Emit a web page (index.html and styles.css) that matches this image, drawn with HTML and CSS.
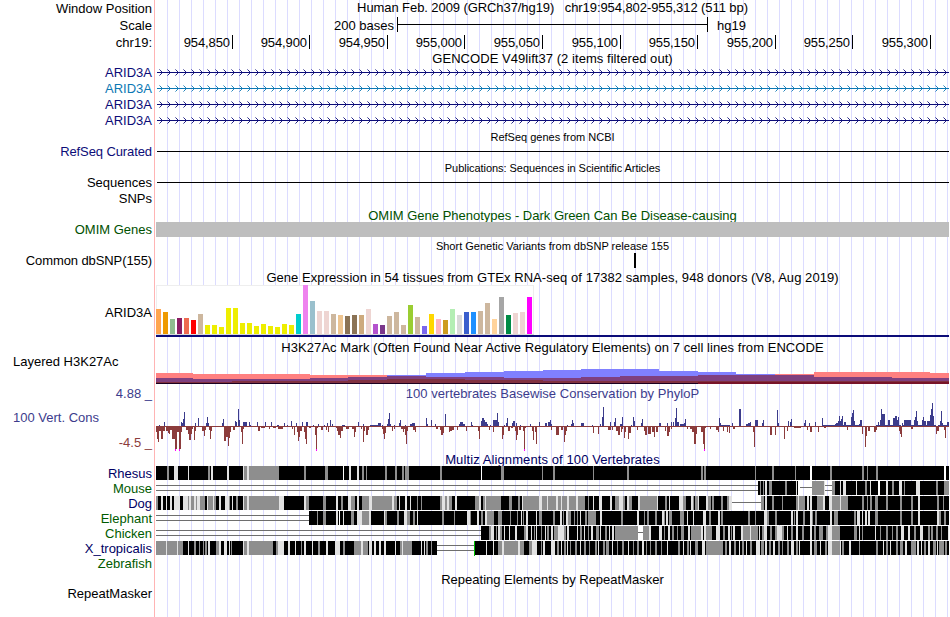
FILE: index.html
```html
<!DOCTYPE html>
<html lang="en">

<head>
    <meta charset="utf-8">
    <title>chr19:954,802-955,312</title>
    <link rel="stylesheet" href="styles.css">
</head>

<body>
    <div class="browser">
        <div class="row position"><span class="label">Window Position</span><div class="track title">Human Feb. 2009 (GRCh37/hg19) &nbsp; chr19:954,802-955,312 (511 bp)</div></div>
        <div class="row scale"><span class="label">Scale</span>
            <div class="track scale-track"><span class="bases">200 bases</span><span class="scale-bar"></span><span>hg19</span></div>
        </div>
        <div class="row ruler"><span class="label">chr19:</span>
            <div class="track ticks">
                <span>954,850</span><span>954,900</span><span>954,950</span><span>955,000</span><span>955,050</span>
                <span>955,100</span><span>955,150</span><span>955,200</span><span>955,250</span><span>955,300</span>
            </div>
        </div>
        <div class="row gencode"><span class="label"></span><div class="track title">GENCODE V49lift37 (2 items filtered out)</div></div>
        <div class="row gene navy"><span class="label">ARID3A</span><svg class="track transcript"></svg></div>
        <div class="row gene blue"><span class="label">ARID3A</span><svg class="track transcript"></svg></div>
        <div class="row gene navy"><span class="label">ARID3A</span><svg class="track transcript"></svg></div>
        <div class="row gene navy"><span class="label">ARID3A</span><svg class="track transcript"></svg></div>

        <div class="row small"><span class="label"></span><div class="track title">RefSeq genes from NCBI</div></div>
        <div class="row refseq navy"><span class="label tight">RefSeq Curated</span><div class="track"><div class="line"></div></div></div>
        <div class="row small"><span class="label"></span><div class="track title tight">Publications: Sequences in Scientific Articles</div></div>
        <div class="row sequences"><span class="label">Sequences</span><div class="track"><div class="line"></div></div></div>
        <div class="row snps"><span class="label">SNPs</span></div>
        <div class="row omim-title green"><span class="label"></span><div class="track title">OMIM Gene Phenotypes - Dark Green Can Be Disease-causing</div></div>
        <div class="row omim green"><span class="label">OMIM Genes</span><div class="track gray-bar"></div></div>
        <div class="row small"><span class="label"></span><div class="track title">Short Genetic Variants from dbSNP release 155</div></div>
        <div class="row dbsnp"><span class="label tight">Common dbSNP(155)</span><div class="track"><div class="snp"></div></div></div>

        <div class="row gtex-title"><span class="label"></span><div class="track title">Gene Expression in 54 tissues from GTEx RNA-seq of 17382 samples, 948 donors (V8, Aug 2019)</div></div>
        <div class="row gtex"><span class="label">ARID3A</span><svg class="track" id="gtex"></svg></div>

        <div class="row h3k-title"><span class="label"></span><div class="track title">H3K27Ac Mark (Often Found Near Active Regulatory Elements) on 7 cell lines from ENCODE</div></div>
        <div class="row h3k"><span class="label left">Layered H3K27Ac</span><svg class="track" id="h3k"></svg></div>

        <div class="row cons-title cons-blue"><span class="label">4.88 _</span><div class="track title">100 vertebrates Basewise Conservation by PhyloP</div></div>
        <div class="row cons">
            <div class="label cons-labels"><span class="cons-blue name">100 Vert. Cons</span><span class="cons-red">-4.5 _</span></div>
            <svg class="track" id="phylop"></svg>
        </div>
        <div class="row multiz-title dark"><span class="label"></span><div class="track title">Multiz Alignments of 100 Vertebrates</div></div>
        <div class="row align dark"><span class="label">Rhesus</span><svg class="track" id="rhesus"></svg></div>
        <div class="row align forest"><span class="label">Mouse</span><svg class="track" id="mouse"></svg></div>
        <div class="row align dark"><span class="label">Dog</span><svg class="track" id="dog"></svg></div>
        <div class="row align forest"><span class="label">Elephant</span><svg class="track" id="elephant"></svg></div>
        <div class="row align forest"><span class="label">Chicken</span><svg class="track" id="chicken"></svg></div>
        <div class="row align dark"><span class="label">X_tropicalis</span><svg class="track" id="xtropicalis"></svg></div>
        <div class="row align forest"><span class="label">Zebrafish</span></div>

        <div class="row repeat-title"><span class="label"></span><div class="track title">Repeating Elements by RepeatMasker</div></div>
        <div class="row repeat"><span class="label">RepeatMasker</span></div>
    </div>

    <script src="script.js"></script>
</body>

</html>
```
FILE: styles.css
```css
body {
    margin: 0;
    background: white;
    color: black;
    font-family: "Liberation Sans", Arial, sans-serif;
    font-size: 13px;
    overflow: hidden;
}

/* pink divider after the labels, guide lines every 12px */
.browser {
    width: 949px;
    height: 617px;
    background:
        linear-gradient(to right, white 154px, #ffb4b4 154px, #ffb4b4 155px, white 155px) 0 0 / 156px 100% no-repeat,
        linear-gradient(to right, #dcdcff 1px, transparent 1px) 11px 0 / 12px 100%;
}

.row {
    display: grid;
    grid-template-columns: 152px 793px;
    column-gap: 4px;
    height: 16px;
    line-height: 16px;
    white-space: pre;
}

.label {
    text-align: right;
}

.label.left {
    text-align: left;
    padding-left: 13px;
}

.track {
    display: block;
    width: 793px;
    height: 100%;
    shape-rendering: crispEdges;
}

.title {
    text-align: center;
}

.label.tight { letter-spacing: -0.1px; }
.title.tight { letter-spacing: -0.05px; }

.position { height: 17px; line-height: 18px; }
.position .title { line-height: 16px; letter-spacing: -0.08px; }
.scale { height: 17px; line-height: 17px; }
.ruler { height: 17px; line-height: 17px; }
.gencode { height: 14px; line-height: 15px; letter-spacing: 0.05px; }
.refseq { height: 16px; }
.sequences { height: 15px; }
.snps { line-height: 17px; }
.omim-title { line-height: 19px; }
.omim { height: 16px; }
.dbsnp { height: 16px; }
.gtex-title { height: 16px; line-height: 18px; letter-spacing: 0.055px; }
.gtex { height: 55px; line-height: 55px; }
.h3k-title { height: 15px; letter-spacing: 0.055px; }
.h3k { height: 30px; line-height: 14px; }
.cons-title { height: 15px; line-height: 17px; }
.cons-title .title { letter-spacing: 0.03px; }
.cons { height: 53px; }
.multiz-title { height: 13px; line-height: 14px; letter-spacing: 0.1px; }
.align { height: 15px; line-height: 16px; }
.repeat-title { height: 15px; line-height: 17px; }
.repeat { height: 16px; }

.small {
    height: 15px;
    line-height: 16px;
    font-size: 11px;
}

.navy { color: #0c0c78; }
.blue { color: #0c78b4; }
.green { color: #005000; }
.dark { color: #000064; }
.forest { color: #005a00; }
.cons-blue { color: #3c3c8c; }
.cons-red { color: #8c3c3c; }

.scale-track {
    display: flex;
}

.bases {
    width: 238px;
    text-align: right;
}

.scale-bar {
    width: 309px;
    height: 15px;
    margin: 0 9px 0 3px;
    border: solid black;
    border-width: 0 1px;
    background: linear-gradient(black, black) 0 7px / 100% 1px no-repeat;
}

.ticks {
    display: grid;
    grid-template-columns: 77px 77px 78px 77px 78px 78px 77px 78px 77px 78px;
    text-align: right;
    letter-spacing: -0.1px;
}

.ticks span {
    height: 14px;
    margin-top: 1px;
    line-height: 15px;
    padding-right: 2px;
    border-right: 1px solid black;
}

.line {
    height: 1px;
    margin: 7px 0 0 1px;
    background: black;
}

.gray-bar {
    height: 15px;
    background: #bebebe;
}

.snp {
    width: 2px;
    height: 15px;
    margin-left: 478px;
    background: black;
}

.cons-labels {
    display: flex;
    flex-direction: column;
}

.cons-labels .name {
    text-align: left;
    padding: 10px 0 9px 13px;
}
```
FILE: script.js
```js
const NS = 'http://www.w3.org/2000/svg';

function rect(svg, x, y, w, h, fill, opacity = 1) {
    const r = document.createElementNS(NS, 'rect');
    r.setAttribute('x', x);
    r.setAttribute('y', y);
    r.setAttribute('width', w);
    r.setAttribute('height', h);
    r.setAttribute('fill', fill);
    if (opacity < 1) r.setAttribute('fill-opacity', opacity);
    svg.appendChild(r);
}

// transcripts: intron line with strand arrows
document.querySelectorAll('.transcript').forEach(svg => {
    rect(svg, 1, 7, 792, 1, 'currentColor');
    for (let x = 6; x < 793; x += 8) {
        for (let i = 1; i <= 3; i++) {
            const opacity = i === 3 ? 0.5 : 0.9;
            rect(svg, x - i, 7 - i, 1, 1, 'currentColor', opacity);
            rect(svg, x - i, 7 + i, 1, 1, 'currentColor', opacity);
        }
    }
});

// GTEx tissues
const heights = [25, 22, 15, 16, 16, 14, 20, 9, 9, 7, 26, 26, 11, 11, 8, 10, 8, 7, 10, 9, 20, 49, 33, 23, 23, 20, 19,
    18, 19, 19, 25, 10, 9, 18, 22, 9, 29, 17, 8, 20, 15, 14, 25, 19, 22, 22, 23, 31, 15, 37, 19, 21, 22, 37];
const yellow = Array(13).fill('#eeee00');
const colors = ['#ffa54f', '#ee9a00', '#8fbc8f', '#8b1c62', '#ee6a50', '#ff0000', '#cdb79e', ...yellow,
    '#00cdcd', '#ee82ee', '#9ac0cd', '#eed5d2', '#eed5d2', '#cdb79e', '#eec591', '#8b7355', '#8b7355', '#cdaa7d',
    '#eed5d2', '#b452cd', '#7a378b', '#cdb79e', '#cdb79e', '#cdb79e', '#9acd32', '#cdb79e', '#7a67ee', '#ffd700',
    '#ffb6c1', '#cd9b1d', '#b4eeb4', '#d9d9d9', '#3a5fcd', '#1e90ff', '#cdb79e', '#cdb79e', '#ffd39b', '#a6a6a6',
    '#008b45', '#eed5d2', '#eed5d2', '#ff00ff'];
const gtex = document.getElementById('gtex');
rect(gtex, 0, 0, 378, 50, '#eeeeee');
rect(gtex, 1, 1, 376, 48, '#ffffff');
rect(gtex, 0, 49, 378, 1, '#d8d8d8');
heights.forEach((h, i) => rect(gtex, i * 7, 49 - h, 5, h, colors[i]));
rect(gtex, 0, 50, 793, 2, '#0c0c78');

// layered H3K27Ac: start x and height above the base line, per cell line
function steps(svg, list, fill) {
    list.forEach(([x, h], i) => {
        const end = i + 1 < list.length ? list[i + 1][0] : 793;
        if (h) rect(svg, x, 29 - h, end - x, h, fill);
    });
}
const h3k = document.getElementById('h3k');
steps(h3k, [[0, 11], [37, 10], [154, 9], [231, 0], [619, 10], [658, 12], [774, 11]], '#ff8080');
steps(h3k, [[231, 9], [270, 11], [309, 12], [348, 13], [387, 14], [425, 15], [503, 13], [542, 12], [580, 10], [619, 0]], '#8080ff');
steps(h3k, [[0, 6], [37, 5], [154, 6], [192, 7], [231, 8], [270, 7], [348, 6], [425, 7], [464, 8], [542, 9], [658, 7], [736, 6]], '#7f407f');
steps(h3k, [[0, 2], [76, 3], [192, 4], [231, 5], [309, 4], [387, 3]], '#803040');
steps(h3k, [[0, 1]], '#1c0020');
steps(h3k, [[542, 2]], '#781428');

// phyloP: x, width, height
const up = `3,1,1;8,1,4;25,1,4;27,1,7;28,1,14;26,1,3;39,1,3;42,1,8;50,1,3;51,1,9;52,1,3;66,1,3;67,1,7;79,1,5;80,1,4;82,1,17;83,1,6;87,4,4;93,1,4;94,1,1;
101,1,4;109,1,4;115,1,4;121,2,1;128,1,3;131,1,1;135,1,5;140,1,3;146,1,4;150,2,4;157,1,1;162,1,2;168,1,1;171,1,3;174,1,6;176,1,2;186,3,1;202,1,4;207,1,2;
217,1,1;222,3,3;226,1,1;231,1,2;232,1,7;233,1,13;234,1,2;238,1,1;243,1,3;244,1,6;249,1,1;254,2,2;256,3,3;270,1,8;271,1,2;275,1,6;279,1,2;289,1,12;
303,1,2;304,3,4;307,2,2;315,1,4;316,1,1;325,1,5;326,2,8;328,1,6;329,2,4;331,1,2;334,1,1;337,4,6;341,1,13;342,1,4;348,1,1;350,1,3;351,1,8;356,1,3;357,2,5;360,1,3;
364,1,1;374,1,2;383,1,4;389,2,3;392,2,4;394,1,6;395,1,2;411,1,1;415,2,2;416,1,6;417,1,3;425,3,3;436,1,1;444,1,2;446,1,9;447,1,19;454,1,4;458,1,4;459,1,8;464,2,2;466,1,9;
475,1,1;477,1,9;478,1,5;485,1,3;486,1,7;503,2,3;511,1,3;515,1,4;517,1,4;519,1,8;520,1,18;521,2,4;526,2,2;528,1,3;529,1,7;
524,2,2;563,1,8;564,1,3;576,1,3;583,2,17;590,2,2;592,2,3;594,1,4;599,3,6;606,1,3;607,1,6;621,1,16;622,1,3;632,1,5;634,1,4;635,1,7;648,1,3;649,1,6;653,1,3;659,1,4;666,1,8;
679,1,2;680,2,3;682,1,5;683,1,10;684,1,5;685,1,7;686,1,10;688,2,4;695,1,9;696,1,13;697,1,16;698,1,5;703,1,2;704,2,6;722,1,4;724,1,6;725,1,17;726,1,12;727,2,12;732,2,6;737,2,8;739,2,10;741,1,6;742,1,9;
746,1,3;748,6,6;754,1,6;758,1,6;759,1,9;760,1,15;761,1,5;766,1,6;767,1,9;768,2,5;771,3,5;774,1,11;775,1,17;776,1,23;777,1,10;784,1,5;785,1,15;786,1,3;791,2,4`;
const down = `0,1,6;1,1,13;2,1,16;3,2,5;5,2,13;7,2,5;10,2,5;12,1,7;13,1,8;14,2,4;16,3,13;19,2,24;21,2,6;23,2,24;25,1,6;30,2,4;32,1,8;33,2,14;35,1,8;36,1,3;38,1,14;39,1,5;
46,2,5;48,1,10;49,1,4;53,1,4;54,1,13;55,1,5;68,2,15;70,2,11;72,1,20;73,1,12;74,1,6;77,2,4;85,1,6;86,1,18;87,1,3;96,2,1;102,2,5;105,4,2;113,1,3;117,3,2;122,5,3;132,1,1;136,1,3;138,1,9;
141,1,6;142,1,15;143,1,11;144,2,5;148,1,6;149,1,13;150,1,18;153,2,2;159,1,9;160,1,24;161,1,2;165,2,4;170,1,4;172,1,6;180,1,2;181,1,5;182,2,9;184,1,12;185,2,5;190,3,3;196,2,3;198,1,11;199,1,6;205,1,3;207,1,16;208,1,5;210,2,9;212,1,4;
226,1,3;227,1,8;228,1,13;229,1,7;236,1,5;238,1,3;245,2,3;247,1,6;248,1,3;249,1,9;250,1,18;251,1,5;257,2,4;259,1,6;
280,2,3;284,1,4;285,2,9;287,1,7;293,1,6;294,2,5;296,2,4;301,1,4;310,1,5;322,1,5;323,1,13;333,1,4;337,1,6;346,1,13;347,1,9;352,2,5;355,2,2;359,1,5;360,1,14;361,1,9;363,2,4;367,1,5;368,1,24;369,1,2;376,1,5;377,1,14;379,1,6;380,1,18;
395,1,4;400,3,9;405,2,4;408,1,16;409,1,9;410,1,5;437,1,7;442,1,8;452,3,4;456,1,4;460,2,5;462,2,9;465,1,6;466,1,3;468,1,12;469,1,6;472,1,13;473,2,7;481,1,4;488,1,5;489,2,9;492,3,8;496,2,6;498,1,11;500,2,6;509,1,5;511,2,10;513,1,6;515,1,3;
531,1,3;534,2,3;536,2,6;538,1,18;539,1,18;540,1,8;545,2,6;547,1,18;548,1,24;549,1,2;554,1,3;560,2,4;562,1,6;567,1,5;571,1,6;573,1,7;577,2,3;597,1,6;598,1,21;614,2,9;619,1,9;628,1,13;631,1,5;638,7,2;651,1,4;654,2,6;662,1,6;668,2,2;
691,1,4;706,1,8;709,1,21;710,1,10;712,2,5;718,2,6;720,1,4;743,1,5;744,1,8;745,1,11;755,2,3;780,1,8;781,2,5;788,1,4;789,1,12`;
const phylop = document.getElementById('phylop');
rect(phylop, 0, 26, 793, 1, '#8c3c3c');
up.split(';').forEach(s => {
    const [x, w, h] = s.split(',').map(Number);
    rect(phylop, x, 26 - h, w, h, '#3c3c8c');
});
down.split(';').forEach(s => {
    const [x, w, h] = s.split(',').map(Number);
    rect(phylop, x, 26, w, Math.min(h, 23), '#8c3c3c');
    if (h === 24) rect(phylop, x, 49, 1, 2, '#ff00ff');
});
// short stretches of positive scores
[[3, 1], [214, 9], [565, 9], [666, 16], [686, 10], [698, 8], [720, 25], [746, 34], [782, 9]].forEach(([x, w]) => rect(phylop, x, 25, w, 1, '#3c3c8c'));

// alignments: black blocks with g(ray), l(ight) and w(hite) columns,
// d = double gap line, s = single gap line, n = green insert mark
const shades = { g: '#8e8e8e', l: '#e2e2e2', w: '#ffffff', n: '#00c000', k: '#000000' };
const alignments = {
    rhesus: `g11,2 l18,4 l32,1 g52,2 l55,2 l71,2 l87,1 g88,3 l91,2 g93,30 g148,2 g169,3 w187,1 l193,2 l201,2 g206,2 g210,1 g229,2 g239,2 g246,2 g249,4
        g284,2 w325,1 g345,3 g386,1 g397,2 g437,1 g471,2 g545,2 g548,2 g599,1 g616,2 g639,1 w654,2 g674,2 g706,2 g711,1 g720,2 w788,2`,
    mouse: `d0,602 g604,1 g607,1 l609,2 g613,3 g629,2 l640,1 w642,2 s644,12 g656,12 l668,1 d669,7 g676,3 l684,1 l687,3 l700,1 g709,2 l714,1 w722,2 l730,2
        g736,2 l743,3 g748,1 l760,4 g780,2 g788,5`,
    dog: `g0,2 l5,2 l10,1 l14,2 l18,6 l27,5 g32,1 l33,2 g35,3 l38,2 g40,1 l41,3 g44,5 l51,1 g52,5 l57,1 g58,2 l63,2 l69,4 g73,1 l76,1 g80,2 l87,1 g88,3 l91,2
        g93,30 l123,5 l148,2 g150,3 g167,3 l180,2 g185,2 l192,3 g195,4 l201,2 g206,7 l213,3 g216,20 l236,2 g238,3 l243,1 l249,2 l254,1 g261,1
        g265,1 g284,2 l286,3 g289,2 l291,2 g293,3 l299,2 g319,4 l323,2 g327,2 l329,1 g330,15 g353,3 g362,2 l366,1 g367,16 l383,3 g386,5 l391,1 g392,8 l400,2 g402,27
        l405,1 l411,2 l420,2 g432,1 l437,1 l443,3 l454,2 g459,4 l463,4 g467,2 l471,2 g473,3 l482,2 g484,17 l501,1 g509,2 l513,1 l523,4 g527,3 l535,2 g537,1 g539,3 l542,1
        l550,2 g552,3 g556,2 g565,2 g571,2 l573,3 w576,29 s576,29 g605,3 l609,2 g616,2 g626,1 g640,2 l642,1 g643,6 l651,2 l654,2 g661,6 l667,2 l673,3 g676,8 l684,1 g685,7
        g706,2 g711,1 g714,2 g719,3 g730,2 g744,2 g755,2 l762,2 g781,2 g787,1`,
    elephant: `d0,153 g161,1 g167,3 l180,2 w183,1 l187,1 g195,3 l201,5 g206,7 l213,2 l228,1 g229,2 g241,2 l248,3 g251,3 g257,2 l261,1 g286,2 g298,1 l311,3 g314,1 l321,2
        g325,2 l329,2 g331,7 g342,4 g354,1 g361,1 l365,1 g367,1 l370,2 l380,1 g383,3 g397,2 l404,2 g407,1 l410,2 g412,3 g418,1 g421,1 l424,1 g429,2 g432,8 l444,2 g465,2 l481,2
        g488,1 g491,2 g499,2 l506,2 g508,1 l510,2 g513,3 g524,4 l531,1 l537,1 l547,3 g553,2 l562,2 g565,2 g592,2 g599,1 l608,3 g611,2 g619,2 l635,2 l640,2 g638,1 g647,2 l654,2 g656,1 g659,2
        l674,2 g678,4 g698,2 l701,3 l706,1 l709,2 l712,2 g719,3 g744,2 g755,2 l762,2 l781,2 g783,2 g788,2`,
    chicken: `d0,325 g333,2 l335,3 g340,1 l342,2 g344,2 l348,1 l353,1 l359,2 g368,2 l370,2 l375,1 g378,1 l380,1 g385,1 l389,1 g391,2 l395,2 g398,4 l402,6 g408,2 l411,2 l421,1 g424,2
        l428,1 g432,1 l435,2 g440,3 l444,1 g449,2 l453,1 l456,2 g459,23 w482,5 s482,5 g487,6 l493,2 l503,3 g508,1 l512,2 g516,2 g521,1 g525,3 l532,2 g535,10 l545,2 l548,2 g550,6 l560,4 g567,2
        l572,2 g575,1 l577,2 l585,2 g587,7 l594,1 g595,7 l603,1 g606,2 l608,3 g614,2 g619,2 l621,5 g626,2 l631,1 g635,2 l640,2 g646,2 l654,2 g658,2 g663,4 g670,2 l672,4 g676,8
        g698,3 l703,1 g706,1 l719,1 g724,1 g730,2 g736,1 g740,2 l745,3 l752,2 g758,2 l764,3 g772,2 g775,2 g780,2 g785,1 l792,1`,
    xtropicalis: `g0,10 l10,1 g11,10 l21,1 g22,5 l32,1 g38,2 g43,1 g47,1 g49,2 l52,2 g60,3 l63,2 l68,3 l73,1 g75,1 l87,1 g88,3 l91,2 g93,24 g120,2 l122,6 l132,2 l139,1 g145,1 l148,2
        l156,1 g162,2 l170,2 l179,5 g187,2 g198,7 l205,2 g207,5 l213,3 l218,2 l223,2 l228,2 l239,1 g244,2 l246,1 g247,9 l265,1 l268,1 g270,2 g275,1
        w281,37 d281,37 n318,1 l330,1 l337,1 g342,4 l346,2 g348,14 l362,2 g364,4 g373,3 l376,5 g385,1 l387,2 l395,4 g401,2 l405,1 g408,2 l411,1 g414,1 g419,2 l424,1 g428,2 g433,1
        g439,2 l442,1 g447,2 g450,3 l456,1 g461,1 g466,2 l472,1 g477,1 g481,2 l486,2 g490,1 g494,1 g499,2 g505,1 l511,1 g522,2 l527,1 g531,2
        l534,1 g539,3 l546,3 g550,17 g569,2 l573,2 g578,2 l583,1 g586,2 l590,1 g594,2 l600,4 g605,3 l609,2 g613,2 l617,2 g622,2 g626,1 g631,2 l635,3 g640,2 l643,1 l654,2 g658,3 l664,1
        g669,2 l672,4 g676,8 l684,1 g686,2 l693,2 g703,1 g720,2 l727,1 g730,2 l734,1 g740,2 g744,3 l749,2 g755,5 l761,2 l765,1 g768,2 l772,2 g777,3 l781,1 g783,5 g789,2`
};
for (const id in alignments) {
    const svg = document.getElementById(id);
    rect(svg, 0, 0, 793, 14, shades.k);
    alignments[id].trim().split(/\s+/).forEach(s => {
        const [x, w] = s.slice(1).split(',').map(Number);
        if (s[0] === 'd') {
            gap(svg, x, w);
            rect(svg, x, 4, w, 1, '#6e6e6e');
            rect(svg, x, 9, w, 1, '#6e6e6e');
        } else if (s[0] === 's') {
            gap(svg, x, w);
            rect(svg, x, 6, w, 1, '#6e6e6e');
        } else {
            rect(svg, x, 0, w, s[0] === 'n' ? 15 : 14, shades[s[0]]);
        }
    });
}

// unaligned stretch, guide lines stay visible
function gap(svg, x, w) {
    rect(svg, x, 0, w, 14, '#ffffff');
    for (let g = 11; g < x + w; g += 12) {
        if (g >= x) rect(svg, g, 0, 1, 14, '#dcdcff');
    }
}
```
